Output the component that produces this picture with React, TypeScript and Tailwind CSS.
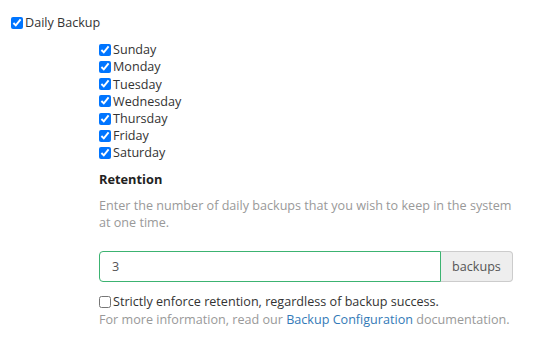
import React from 'react';

const days = ['Sunday', 'Monday', 'Tuesday', 'Wednesday', 'Thursday', 'Friday', 'Saturday'];

const App: React.FC = () => {
    return (
        <div className="min-h-screen bg-white text-[12.6px] leading-[17.2px] text-[#333333]" style={{ fontFamily: '"Open Sans", sans-serif' }}>
            <div className="pl-[11px] pt-[14px]">
                <label className="flex items-center gap-[2px]">
                    <input type="checkbox" defaultChecked className="m-0 h-[12px] w-[12px]" />
                    <span>Daily Backup</span>
                </label>

                <div className="ml-[88px] mt-[10px] w-[414px]">
                    <div className="flex flex-col">
                        {days.map((day) => (
                            <label key={day} className="flex items-center gap-[2px]">
                                <input type="checkbox" defaultChecked className="m-0 h-[12px] w-[12px]" />
                                <span>{day}</span>
                            </label>
                        ))}
                    </div>

                    <h4 className="mt-[7px] text-[12.8px] font-bold leading-[20px] text-[#222222]">Retention</h4>
                    <p className="mt-[8px] text-[#999999]">
                        Enter the number of daily backups that you wish to keep in the system at one time.
                    </p>

                    <div className="mt-[20px] flex h-[31px]">
                        <input
                            type="text"
                            defaultValue="3"
                            className="min-w-0 flex-1 rounded-l-[4px] border border-[#3cb371] px-[12px] text-[12.6px] text-[#555555] outline-none"
                        />
                        <span className="flex w-[72px] items-center justify-center rounded-r-[4px] border border-l-0 border-[#cccccc] bg-[#eeeeee] text-[#555555]">
                            backups
                        </span>
                    </div>

                    <label className="mt-[11px] flex items-center gap-[2px]">
                        <input type="checkbox" className="m-0 h-[12px] w-[12px]" />
                        <span>Strictly enforce retention, regardless of backup success.</span>
                    </label>
                    <p className="mt-[1px] whitespace-nowrap text-[#999999]">
                        For more information, read our <a href="#" className="text-[#337ab7]">Backup Configuration</a> documentation.
                    </p>
                </div>
            </div>
        </div>
    );
};

export default App;
